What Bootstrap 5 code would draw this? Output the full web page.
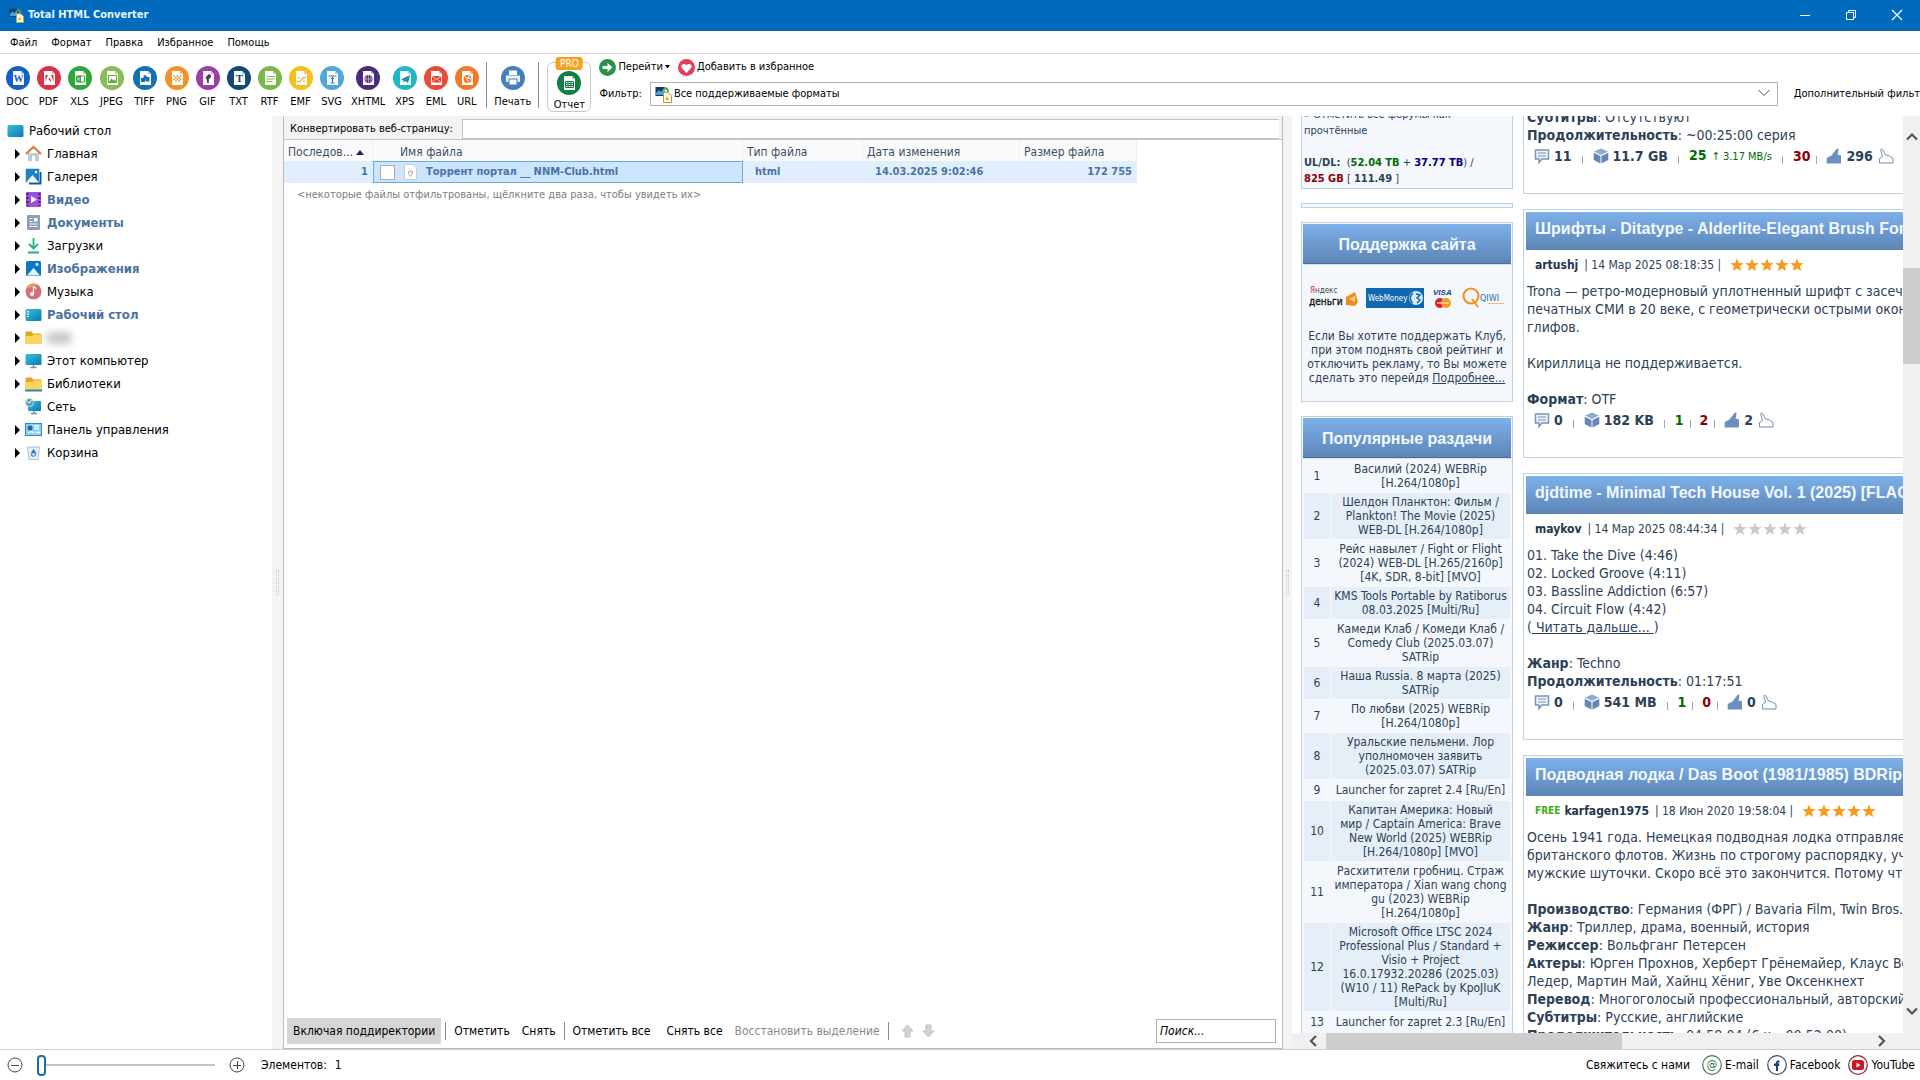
<!DOCTYPE html>
<html lang="ru">
<head>
<meta charset="utf-8">
<meta name="viewport" content="width=device-width, initial-scale=1">
<title>Total HTML Converter</title>
<link href="https://cdn.jsdelivr.net/npm/bootstrap@5.3.0/dist/css/bootstrap.min.css" rel="stylesheet">
<style>
:root{--ui:"DejaVu Sans Condensed","Noto Sans",sans-serif;--head:"Liberation Sans",Arial,sans-serif}
body{font-family:var(--ui);font-size:11px;line-height:14px;color:#000;background:#fff}
svg{display:block;flex:none}
button{font:inherit;color:inherit;background:none;border:0;padding:0}
a{color:inherit;text-decoration:none}
ul{list-style:none;margin:0;padding:0}
.titlebar{height:31px;background:#006abd;color:#fff;padding-left:9px;border-bottom:1px solid #1a64a0}
.titlebar h1{font-size:11px;line-height:16px;font-weight:700;margin:0;color:#e6f6ff}
.titlebar button{width:46px;height:30px}
.menubar{height:23px;border-bottom:1px solid #dcdcdc;padding:2px 3px 0}
.menubar a{padding:0 7px}
.toolbar{height:62px;padding-left:2px}
.tool{min-width:31px;padding:0 3px;display:flex;flex-direction:column;align-items:center;gap:5px}
.tool.wide{min-width:33px;padding:0 4px}
.vline{width:1px;background:#8c8c8c}
.toolbar .vline{height:46px}
.report{position:relative;border:1px solid #c9c9c9;border-radius:6px;width:44px;height:50px;padding-top:8px}
.report .cap{line-height:11px}
.pro{position:absolute;top:-6px;left:50%;transform:translateX(-50%);background:#f6a21c;color:#fff;border-radius:3px;font-size:10px;line-height:13px;padding:0 4px;z-index:1}
.go{height:24px;padding-top:2px}
.go button{display:flex;align-items:center;gap:2px}
.combo{position:relative;flex:1 1 auto}
.combo select{appearance:none;width:100%;height:24px;border:1px solid #b4b4b4;background:#fff;font:inherit;color:#000;padding:0 24px 0 23px;border-radius:0}
.combo svg{position:absolute;top:4px;pointer-events:none}
.combo .c-ico{left:5px}.combo .c-chev{right:8px;top:7px}
.tree{flex:0 0 272px;padding-top:3px;font-size:13px;line-height:23px}
.tree a{display:flex;align-items:center;gap:5px;height:23px;padding-left:15px;white-space:nowrap}
.tree a.rootnode{padding-left:7px}
.tree .hot{font-weight:700;color:#4a719f}
.arr{width:5px;height:10px;border-left:5px solid #000;border-top:5px solid transparent;border-bottom:5px solid transparent}
.arr.none{visibility:hidden}
.blurred{filter:blur(4px);background:#bbb;height:10px;width:24px}
.split{flex:0 0 11px;background:#f4f4f4}
.split.thin{flex-basis:9px}
.split i{width:3px;height:26px;border:1px dotted #ccc}
.center{flex:1 1 auto;min-width:0;border:1px solid #bbb;border-top:0}
.webrow{height:24px;background:#f3f3f3;border-bottom:1px solid #c6c6c6;padding-top:2px}
.webrow label{padding:0 9px 0 6px}
.webrow input{height:20px;flex:1 1 auto;border:1px solid #c4c4c4;border-right:0;background:#fff;font:inherit;min-width:0;margin-right:3px}
.files{border-collapse:separate;border-spacing:0;table-layout:fixed;width:853px;font-size:12px}
.files th{height:21px;font-weight:400;color:#3b4f63;background:#fafafa;border-right:1px solid #eee;padding:2px 4px 0;white-space:nowrap}
.files th.name{padding-left:27px}
.files td{height:22px;font-size:11px;font-weight:700;color:#4a73a8;background:#e1effc;padding:0 5px;white-space:nowrap}
.files td.ext{padding-left:12px}
.files td.picked{background:#cce4fc;border:1px solid #69abdc}
.files input{width:15px;height:15px;appearance:none;border:1px solid #a8adb2;background:#fff;margin:0 9px 0 6px}
.fname{margin-left:9px}
.note{font-size:11px;color:#7d7d7d;padding:5px 13px}
.actions{height:31px;padding:0 6px 4px 3px;font-size:12px}
.actions .on{background:#d5d5d5;height:26px;padding:0 6px}
.actions .off{color:#8a8a8a}
.actions .vline{height:18px}
.actions input{width:120px;height:24px;border:1px solid #b0b0b0;font:italic 12px/16px var(--ui);padding:0 3px}
.actions input::placeholder{color:#000;opacity:1}
.web{flex:0 0 628px;min-width:0;background:#fff}
.page{flex:1 1 auto;overflow:hidden;color:#2c4158;padding-left:9px}
.pagein{min-width:1100px;gap:10px;margin-top:-11px}
.lcol{flex:0 0 212px;font-size:12px}
.rcol{flex:1 1 auto;font-size:14px;line-height:18px;white-space:nowrap}
.box{border:1px solid #bcd1e5;background:#f4f8fd;padding:1px;margin-bottom:14px}
.box h2,.post h2{font:700 16px/20px var(--head);color:#f2f8ff;background:linear-gradient(#7db1ea,#5c84b5);margin:0}
.box h2{height:41px;padding-top:1px;border-bottom:1px solid #cfe0f2;box-shadow:inset 0 -1px #49709c;display:flex;align-items:center;justify-content:center}
.first{height:84px;padding:1px 2px 0;font-size:11px;line-height:16px}
.slim{height:5px}
.logos{padding:20px 0 19px}
.supp p{padding-bottom:15px;white-space:nowrap}
.up{color:#006b00}.dn{color:#8b0000}.bl{color:#000080}
.pop{width:100%;border-collapse:separate;border-spacing:1px;table-layout:fixed;text-align:center}
.pop .num{width:26px}
.pop td{height:20px;padding:2px 0;line-height:14px;white-space:nowrap}
.pop tr:nth-child(even) td{background:#e6eef7}
.post{border:1px solid #bcd1e5;border-right:0;background:#fff;padding:2px 3px 25px;margin-bottom:15px}
.post h2{height:38px;padding-left:9px;line-height:34px;margin-left:-1px}
.meta{font-size:12px;height:30px;padding:0 8px;margin-bottom:2px;display:flex;align-items:center;gap:6px}
.meta svg{margin-left:3px}
.meta b{color:#1f3650}
.meta .free{color:#3fae10;font-size:10px;margin-right:-2px}
.stats{display:flex;align-items:center;height:24px;padding-left:7px;font-weight:700}
.stats i{width:1px;height:8px;background:#9aa6b2;margin:8px 10px 0}
.stats i.near{margin-left:6px;margin-right:9px}
.stats svg{margin-right:4px}
.stats svg:last-child{margin:0 0 0 5px}
.stats small{font-size:11px;font-weight:400;margin-left:5px}
.vscroll{flex:0 0 17px;background:#f0f0f0;padding:16px 0 17px}
.vthumb{height:96px;background:#cdcdcd;margin-top:127px}
.hscroll{height:16px;background:#f0f0f0;padding:0 32px 0 15px}
.hthumb{flex:0 0 296px;background:#cdcdcd;margin-left:7px}
.status{height:31px;border-top:1px solid #cfcfcf;font-size:12px;padding:0 5px 0 7px}
.status input{appearance:none;width:178px;height:22px;margin:0 14px;background:linear-gradient(#c4c4c4,#c4c4c4) center/100% 2px no-repeat}
.status input::-webkit-slider-thumb{appearance:none;width:9px;height:21px;border:2px solid #1c6ea8;border-radius:4px;background:#fff}
.status a{display:flex;align-items:center;gap:3px}
</style>
<script src="https://cdn.jsdelivr.net/npm/bootstrap@5.3.0/dist/js/bootstrap.bundle.min.js"></script>
</head>
<body class="d-flex flex-column vh-100 overflow-hidden">
<svg width="0" height="0" class="position-absolute" aria-hidden="true">
<defs>
<linearGradient id="gd" x1="0" y1="0" x2="1" y2="1"><stop offset="0" stop-color="#38c3d6"/><stop offset="1" stop-color="#0b76b8"/></linearGradient>
<symbol id="pg" viewBox="0 0 24 24"><path d="M7 5h8l3 3v11H7z" fill="#fff"/><path d="M15 5v3h3z" fill="#bcc8d4"/></symbol>
<symbol id="chat" viewBox="0 0 16 16"><path d="M1.500 2h13v9H8l-3 3.500V11H1.500z" fill="#eef4fb" stroke="#7695bd" stroke-width="1.500"/><path d="M4 5h8M4 8h8" stroke="#7695bd"/></symbol>
<symbol id="cube" viewBox="0 0 16 16"><path d="M8 .5l7 3-7 3.500-7-3.500z" fill="#8fadd2"/><path d="M.7 4.700L7.500 8v7.500l-6.800-3.500zM15.300 4.700L8.500 8v7.500l6.800-3.500z" fill="#6488b6"/></symbol>
<symbol id="thumb" viewBox="0 0 16 16"><path d="M.7 10l4.800-2.500L10.500 1c1.300-1.200 2.300-.2 2 1.300L11.500 6.500l3.500 1v8H.7z" fill="#6a8fc0"/></symbol>
<symbol id="thumbo" viewBox="0 0 16 16"><path d="M1.500 15V10.500L4.500 8.500 2.800 2.500C2.500.8 4 .3 4.800 1.800L7.500 7l4 1 3.500 2.500V15z" fill="#fafcff" stroke="#7190b5"/></symbol>
<symbol id="conv" viewBox="0 0 17 17"><rect x=".5" y="1" width="9" height="9" fill="#123a63"/><path d="M1 7l3-3 2 2 3-4v7H1z" fill="#49a8d8"/><path d="M9 2c3 0 4 2 4 4" stroke="#57a639" stroke-width="2" fill="none"/><path d="M8.500 6.500h5l3 3v7h-8z" fill="#fffbe8" stroke="#b99a36"/><path d="M10 14l2-4 2 4z" fill="#e4b322"/></symbol>
<symbol id="desk" viewBox="0 0 17 17"><rect x=".5" y="3" width="16" height="12" rx="1.500" fill="url(#gd)"/></symbol>
<symbol id="fold" viewBox="0 0 17 17"><path d="M.5 3.500q0-1 1-1h5l1.500 2h7.500q1 0 1 1V14q0 1-1 1h-14q-1 0-1-1z" fill="#dfa51d"/><path d="M.5 7h6.500L8.500 5.500h8V14q0 1-1 1h-14q-1 0-1-1z" fill="#ffd45e"/></symbol>
<symbol id="pic" viewBox="0 0 17 17"><rect x="1" y="1" width="15" height="15" rx="1.500" fill="#0c78c8"/><path d="M2 15.500l6.500-7.500 6.500 7.500z" fill="#e9f5ff"/><circle cx="12" cy="4.500" r="1.400" fill="#fff"/></symbol>
<symbol id="star" viewBox="0 0 14 14"><path d="M7 .5l1.800 4.600 4.900.2-3.900 3 1.400 4.800L7 10.400l-4.200 2.700 1.400-4.800-3.900-3 4.900-.2z"/></symbol>
</defs></svg>

<header class="titlebar d-flex align-items-center flex-shrink-0">
 <svg width="15" height="15" class="me-1"><use href="#conv"/></svg>
 <h1>Total HTML Converter</h1>
 <div class="ms-auto d-flex">
  <button aria-label="Свернуть"><svg class="mx-auto" width="12" height="12"><path d="M1 6.500h10" stroke="#fff"/></svg></button>
  <button aria-label="Развернуть"><svg class="mx-auto" width="12" height="12" fill="none" stroke="#fff"><path d="M1.500 3.500h7v7h-7zM3.500 3V1.500h7v7H9"/></svg></button>
  <button aria-label="Закрыть"><svg class="mx-auto" width="12" height="12"><path d="M1 1l10 10M11 1L1 11" stroke="#fff" stroke-width="1.200"/></svg></button>
 </div>
</header>
<nav class="menubar d-flex align-items-center flex-shrink-0"><a href="#">Файл</a><a href="#">Формат</a><a href="#">Правка</a><a href="#">Избранное</a><a href="#">Помощь</a></nav>

<div class="toolbar d-flex align-items-start flex-shrink-0 overflow-hidden">
 <div class="d-flex pt-2 mt-1 flex-shrink-0">
  <button class="tool"><svg width="24" height="24" viewBox="0 0 24 24"><circle cx="12" cy="12" r="12" fill="#1560c8"/><use href="#pg"/><text x="12.500" y="16" text-anchor="middle" font-family="Liberation Serif" font-weight="700" font-size="10" fill="#1560c8">W</text></svg>DOC</button>
  <button class="tool"><svg width="24" height="24" viewBox="0 0 24 24"><circle cx="12" cy="12" r="12" fill="#d8334a"/><use href="#pg"/><path d="M8.500 9h2.500L8.500 15.500zM16.500 9H14l2.500 6.500zM12.500 11l2 4.500h-1.300l-.7-1.500h-1z" fill="#d8334a"/></svg>PDF</button>
  <button class="tool"><svg width="24" height="24" viewBox="0 0 24 24"><circle cx="12" cy="12" r="12" fill="#2fa83a"/><use href="#pg"/><path d="M8 10l5-1v8l-5-1z" fill="#2fa83a"/><path d="M13 10h3.500v6H13" fill="none" stroke="#2fa83a"/><path d="M9.500 11.500l2 3m0-3l-2 3" stroke="#fff" stroke-width=".8"/></svg>XLS</button>
  <button class="tool wide"><svg width="24" height="24" viewBox="0 0 24 24"><circle cx="12" cy="12" r="12" fill="#86bd57"/><use href="#pg"/><rect x="8.500" y="9.500" width="8" height="7" fill="none" stroke="#6aa83c"/><path d="M9 16l2.500-3.500 2 2 1-1 2 2.500z" fill="#6aa83c"/></svg>JPEG</button>
  <button class="tool wide"><svg width="24" height="24" viewBox="0 0 24 24"><circle cx="12" cy="12" r="12" fill="#1470b4"/><use href="#pg"/><path d="M8 12h4v4H8zM12.500 11h4v4.500h-4zM11 9l3 1-1 4-3-1z" fill="#1470b4"/></svg>TIFF</button>
  <button class="tool"><svg width="24" height="24" viewBox="0 0 24 24"><circle cx="12" cy="12" r="12" fill="#f4912a"/><use href="#pg"/><path d="M8.500 10h8M8.500 13.200h8" stroke="#f4912a" stroke-width="1.600" stroke-dasharray="1.600 1.600"/><path d="M10.100 11.600h6.400M10.100 14.800h6.400" stroke="#f4912a" stroke-width="1.600" stroke-dasharray="1.600 1.600"/></svg>PNG</button>
  <button class="tool"><svg width="24" height="24" viewBox="0 0 24 24"><circle cx="12" cy="12" r="12" fill="#9a40a4"/><use href="#pg"/><path d="M12 17v-7l-2 2M12 10c2-2 3 0 1.500 1.500z" fill="#5e2572" stroke="#5e2572" stroke-width="1.600"/></svg>GIF</button>
  <button class="tool"><svg width="24" height="24" viewBox="0 0 24 24"><circle cx="12" cy="12" r="12" fill="#0f4a78"/><use href="#pg"/><text x="12.500" y="16" text-anchor="middle" font-family="Liberation Serif" font-weight="700" font-size="11" fill="#0f4a78">T</text></svg>TXT</button>
  <button class="tool"><svg width="24" height="24" viewBox="0 0 24 24"><circle cx="12" cy="12" r="12" fill="#79b94a"/><use href="#pg"/><path d="M8.500 10.500h8M8.500 13h8M8.500 15.500h6" stroke="#79b94a" stroke-width="1.200"/></svg>RTF</button>
  <button class="tool"><svg width="24" height="24" viewBox="0 0 24 24"><circle cx="12" cy="12" r="12" fill="#f3c01c"/><use href="#pg"/><path d="M8 15.500h3l3-4h3M9 12h2M14 15h2" stroke="#eda12b" stroke-width="1.200" fill="none"/></svg>EMF</button>
  <button class="tool"><svg width="24" height="24" viewBox="0 0 24 24"><circle cx="12" cy="12" r="12" fill="#4fa8dc"/><use href="#pg"/><path d="M8.500 10h8M12.500 10v7M10.500 17h4M11 12.500h3" stroke="#2b82bd" stroke-width="1.200" fill="none"/></svg>SVG</button>
  <button class="tool wide"><svg width="24" height="24" viewBox="0 0 24 24"><circle cx="12" cy="12" r="12" fill="#4a2a7a"/><use href="#pg"/><circle cx="12.500" cy="13" r="4" fill="#4a2a7a"/><path d="M8.500 13h8M12.500 9v8M10.500 9.500q-1.500 3.500 0 7M14.500 9.500q1.500 3.500 0 7" stroke="#fff" stroke-width=".5" fill="none"/></svg>XHTML</button>
  <button class="tool"><svg width="24" height="24" viewBox="0 0 24 24"><circle cx="12" cy="12" r="12" fill="#20b8c4"/><use href="#pg"/><path d="M8 13.500l9-4.500-2 8-3-2-1.500 2v-2.500z" fill="#1593ab"/></svg>XPS</button>
  <button class="tool"><svg width="24" height="24" viewBox="0 0 24 24"><circle cx="12" cy="12" r="12" fill="#e64b33"/><use href="#pg"/><rect x="8" y="10" width="9" height="6.500" fill="#e0402c"/><path d="M8 10l4.500 3.500L17 10M8 16.500l3-3m6 3l-3-3" stroke="#fff" stroke-width=".8" fill="none"/></svg>EML</button>
  <button class="tool"><svg width="24" height="24" viewBox="0 0 24 24"><circle cx="12" cy="12" r="12" fill="#f17a2a"/><use href="#pg"/><circle cx="12.500" cy="13" r="4" fill="#f17a2a"/><path d="M10 11l2 1v2l2 2M14 10l-1 2 3 1" stroke="#fff" fill="none"/></svg>URL</button>
 </div>
 <div class="vline mt-2 ms-1"></div>
 <button class="tool pt-2 mt-1 ms-1"><svg width="24" height="24" viewBox="0 0 24 24"><circle cx="12" cy="12" r="12" fill="#4580bd"/><path d="M8 4.500h8V9H8z" fill="#fff"/><path d="M5 9.500h14V16H5z" fill="#e8f0f8"/><path d="M8 13h8v6H8z" fill="#fff" stroke="#4580bd"/></svg>Печать</button>
 <div class="vline mt-2 ms-1 me-2"></div>
 <button class="report d-flex flex-column align-items-center mt-2 flex-shrink-0"><span class="pro">PRO</span><svg class="mb-1" width="24" height="24" viewBox="0 0 24 24"><circle cx="12" cy="12" r="12" fill="#128043"/><use href="#pg"/><path d="M8.500 10.500h8v6h-8zM8.500 12.500h8M8.500 14.500h8M11 10.500v6M14 10.500v6" stroke="#128043" fill="none"/></svg><span class="cap">Отчет</span></button>
 <div class="flex-grow-1 ms-2">
  <div class="go d-flex align-items-center">
   <button><svg width="17" height="17" viewBox="0 0 17 17"><circle cx="8.500" cy="8.500" r="8.500" fill="#25944a"/><path d="M3.500 7h5V4l5 4.500-5 4.500v-3h-5z" fill="#fff"/></svg>Перейти<svg width="5" height="4"><path d="M0 0h5L2.500 3.500z"/></svg></button>
   <button class="ms-2"><svg width="17" height="17" viewBox="0 0 17 17"><circle cx="8.500" cy="8.500" r="8.500" fill="#e2405a"/><path d="M8.500 14L3.500 8.500c-1-3 3-5 5-2 2-3 6-1 5 2z" fill="#fff"/></svg>Добавить в избранное</button>
  </div>
  <div class="d-flex align-items-center mt-1">
   <label for="flt" class="me-2">Фильтр:</label>
   <div class="combo"><svg class="c-ico" width="17" height="17"><use href="#conv"/></svg><select id="flt"><option>Все поддерживаемые форматы</option></select><svg class="c-chev" width="12" height="8" fill="none" stroke="#555"><path d="M.5 1l5.500 5.500L11.500 1"/></svg></div>
   <a href="#" class="ms-3 text-nowrap flex-shrink-0">Дополнительный фильт</a>
  </div>
 </div>
</div>

<main class="d-flex flex-grow-1" style="min-height:0">
 <aside class="tree"><ul>
  <li><a class="rootnode" href="#"><svg width="17" height="17"><use href="#desk"/></svg>Рабочий стол</a></li>
  <li><a href="#"><i class="arr"></i><svg width="17" height="17"><path d="M3 8h11v8H10v-5H7v5H3z" fill="#c4cad1"/><path d="M1 9l7.500-7L16 9" stroke="#e07b2f" stroke-width="2.200" fill="none"/></svg>Главная</a></li>
  <li><a href="#"><i class="arr"></i><svg width="17" height="17"><path d="M4 4h12.500v12.500H4z" fill="#0d5c9c"/><rect x=".5" y=".5" width="14" height="14" rx="1" fill="#1a82c6" stroke="#fff" stroke-width=".5"/><path d="M1.500 14L7.500 7l6 7z" fill="#f0f8ff"/><circle cx="11" cy="4" r="1.300" fill="#fff"/></svg>Галерея</a></li>
  <li><a class="hot" href="#"><i class="arr"></i><svg width="17" height="17"><rect x="1" y="1" width="15" height="15" rx="1" fill="#9b4fdc"/><path d="M2.500 2v13M14.500 2v13" stroke="#40186e" stroke-width="2" stroke-dasharray="2 2"/><path d="M6 5l6 3.500L6 12z" fill="#fff"/></svg>Видео</a></li>
  <li><a class="hot" href="#"><i class="arr"></i><svg width="17" height="17"><rect x="2" y="1" width="13" height="15" rx="1" fill="#8a9db3"/><path d="M4.500 4.500h3M4.500 7.500h3M4.500 10h8M4.500 12.500h8" stroke="#fff"/><path d="M9 4h3.500v3.500H9z" fill="#fff"/></svg>Документы</a></li>
  <li><a href="#"><i class="arr"></i><svg width="17" height="17" fill="none" stroke="#21b08a" stroke-width="1.800"><path d="M8.500 1v10M4 7l4.500 4.500L13 7M3 15.500h11"/></svg>Загрузки</a></li>
  <li><a class="hot" href="#"><i class="arr"></i><svg width="17" height="17"><use href="#pic"/></svg>Изображения</a></li>
  <li><a href="#"><i class="arr"></i><svg width="17" height="17"><circle cx="8.500" cy="8.500" r="8" fill="#d4707c"/><path d="M1 6a8 8 0 0 1 12-4z" fill="#e49a62"/><circle cx="7" cy="11" r="2" fill="#fff"/><path d="M8.500 11V4l3 1.500" stroke="#fff" stroke-width="1.300" fill="none"/></svg>Музыка</a></li>
  <li><a class="hot" href="#"><i class="arr"></i><svg width="17" height="17"><use href="#desk"/><path d="M3 5v6" stroke="#fff" stroke-width="1.500" stroke-dasharray="1.500 1"/></svg>Рабочий стол</a></li>
  <li><a href="#" aria-label="Папка"><i class="arr"></i><svg width="17" height="17"><use href="#fold"/></svg><span class="blurred"></span></a></li>
  <li><a href="#"><i class="arr"></i><svg width="17" height="17"><rect x=".5" y="2" width="16" height="11" rx="1" fill="url(#gd)"/><path d="M8.500 13v2.500M5.500 15.500h6" stroke="#7c8c99" stroke-width="1.300"/></svg>Этот компьютер</a></li>
  <li><a href="#"><i class="arr"></i><svg width="17" height="17"><use href="#fold"/><path d="M0 15.500h17" stroke="#2383c4" stroke-width="2"/></svg>Библиотеки</a></li>
  <li><a href="#"><i class="arr none"></i><svg width="17" height="17"><rect x="3" y="3" width="13" height="10" rx="1" fill="url(#gd)"/><circle cx="4.500" cy="4.500" r="4" fill="#5b9cb8" stroke="#d5eaf4" stroke-width=".8"/><path d="M1.500 3l3 2 2-3" stroke="#fff" fill="none"/><path d="M9 13v2.500M6 15.500h6" stroke="#7c8c99" stroke-width="1.300"/></svg>Сеть</a></li>
  <li><a href="#"><i class="arr"></i><svg width="17" height="17"><rect x=".5" y="2.500" width="16" height="12" fill="#8fd0f2" stroke="#2e8ac0"/><circle cx="5" cy="7" r="2.500" fill="#1b6aa5"/><path d="M9 5h5M9 7.500h5M3 12l3-1.500 3 1.500M11 11.500h4" stroke="#fff" stroke-width="1.300" fill="none"/></svg>Панель управления</a></li>
  <li><a href="#"><i class="arr"></i><svg width="17" height="17"><path d="M2.500 3h12l-1.500 12.500H4z" fill="#e7edf2" stroke="#b4c0cb"/><path d="M8.500 6l2 3h-4zM6 10.500l2 2M11 10l-2 2.500" fill="#2380c8" stroke="#2380c8" stroke-width="1.200"/></svg>Корзина</a></li>
 </ul></aside>
 <div class="split d-flex align-items-center justify-content-center"><i></i></div>
 <section class="center d-flex flex-column">
  <div class="webrow d-flex flex-shrink-0 align-items-center"><label for="url">Конвертировать веб-страницу:</label><input id="url" type="text"></div>
  <table class="files">
   <colgroup><col style="width:89px"><col style="width:370px"><col style="width:120px"><col style="width:157px"><col style="width:117px"></colgroup>
   <thead><tr><th>Последов... <svg class="d-inline-block" width="8" height="5"><path d="M0 5l4-5 4 5z" fill="#1b2a5c"/></svg></th><th class="name">Имя файла</th><th>Тип файла</th><th>Дата изменения</th><th>Размер файла</th></tr></thead>
   <tbody><tr><td class="text-end">1</td><td class="picked p-0"><div class="d-flex align-items-center"><input type="checkbox" aria-label="Выбрать файл"><svg width="13" height="16"><path d="M.5 .5h8.500l3.500 3.500v11.500H.5z" fill="#fff" stroke="#c9ced3"/><path d="M4.500 7.500l4-.5-.5 3.500-1.500 2L5 10.500z" fill="none" stroke="#a5adb5"/></svg><span class="fname">Торрент портал __ NNM-Club.html</span></div></td><td class="ext">html</td><td class="ext">14.03.2025 9:02:46</td><td class="text-end">172 755</td></tr></tbody>
  </table>
  <div class="note">&lt;некоторые файлы отфильтрованы, щёлкните два раза, чтобы увидеть их&gt;</div>
  <div class="actions d-flex align-items-center mt-auto flex-shrink-0 text-nowrap">
   <button class="on">Включая поддиректории</button><div class="vline ms-1"></div>
   <button class="ms-2">Отметить</button><button class="ms-2 ps-1">Снять</button><div class="vline mx-2"></div>
   <button>Отметить все</button><button class="ms-3">Снять все</button><button class="off ms-2 ps-1">Восстановить выделение</button><div class="vline mx-2"></div>
   <button class="ms-1" aria-label="Вверх"><svg width="13" height="14"><path d="M6.500 1L12 7H9v6H4V7H1z" fill="#d2d2d2" stroke="#c2c2c2"/></svg></button>
   <button class="ms-2" aria-label="Вниз"><svg width="13" height="14"><path d="M6.500 13L12 7H9V1H4v6H1z" fill="#d2d2d2" stroke="#c2c2c2"/></svg></button>
   <input class="ms-auto" type="text" placeholder="Поиск..." aria-label="Поиск">
  </div>
 </section>
 <div class="split thin d-flex align-items-center justify-content-center"><i></i></div>
 <section class="web d-flex flex-column">
  <div class="d-flex flex-grow-1" style="min-height:0">
   <div class="page h-100">
    <div class="pagein d-flex">
     <div class="lcol">
      <div class="box first">» Отметить все форумы как<br>прочтённые<br><br><b>UL/DL:</b>&nbsp; (<b class="up">52.04 TB</b> + <b class="bl">37.77 TB</b>) /<br><b class="dn">825 GB</b> [ <b>111.49</b> ]</div>
      <div class="box slim"></div>
      <div class="box supp"><h2>Поддержка сайта</h2>
       <div class="d-flex align-items-center justify-content-center gap-2 logos">
        <svg width="49" height="25" viewBox="0 0 49 25"><text x="1" y="8" font-size="8" font-family="DejaVu Sans Condensed" fill="#444"><tspan fill="#d22">Я</tspan>ндекс</text><text x="0" y="20" font-size="10" font-family="DejaVu Sans Condensed" fill="#111" stroke="#111" stroke-width=".3">деньги</text><path d="M37 12l9-5 3 10-3 4-9-1z" fill="#f08a1c"/><path d="M40 14l6-3v6z" fill="#ffd9a0"/></svg>
        <svg width="58" height="20" viewBox="0 0 58 20"><rect width="58" height="20" fill="#1069b0"/><text x="2" y="13" font-size="8" font-family="DejaVu Sans Condensed" fill="#fff">WebMoney</text><circle cx="50" cy="10" r="7" fill="#d8eaf8"/><path d="M47 5a6 6 0 0 0 0 10M50 6l4 1-3 3 3 2-3 3" stroke="#1069b0" stroke-width="1.500" fill="none"/></svg>
        <svg width="22" height="22" viewBox="0 0 22 22"><text x="1" y="8" font-size="8" font-style="italic" font-weight="700" font-family="Liberation Sans" fill="#1a3c7c">VISA</text><circle cx="8" cy="16" r="5" fill="#d8222a"/><circle cx="14" cy="16" r="5" fill="#f59a1e"/><path d="M5 16h12" stroke="#fff"/></svg>
        <svg width="44" height="22" viewBox="0 0 44 22"><circle cx="9" cy="9" r="7.500" fill="none" stroke="#f6921e" stroke-width="2.200"/><path d="M10 12l6 8" stroke="#f6921e" stroke-width="2"/><text x="18" y="14" font-size="9" font-family="DejaVu Sans Condensed" fill="#2a6fae">QIWI</text><path d="M26 16.500h16" stroke="#f6b96a"/></svg>
       </div>
       <p class="text-center m-0">Если Вы хотите поддержать Клуб,<br>при этом поднять свой рейтинг и<br>отключить рекламу, то Вы можете<br>сделать это перейдя <a href="#" class="text-decoration-underline">Подробнее...</a></p>
      </div>
      <div class="box"><h2>Популярные раздачи</h2>
       <table class="pop"><tbody>
        <tr><td class="num">1</td><td>Василий (2024) WEBRip<br>[H.264/1080p]</td></tr>
        <tr><td>2</td><td>Шелдон Планктон: Фильм /<br>Plankton! The Movie (2025)<br>WEB-DL [H.264/1080p]</td></tr>
        <tr><td>3</td><td>Рейс навылет / Fight or Flight<br>(2024) WEB-DL [H.265/2160p]<br>[4K, SDR, 8-bit] [MVO]</td></tr>
        <tr><td>4</td><td>KMS Tools Portable by Ratiborus<br>08.03.2025 [Multi/Ru]</td></tr>
        <tr><td>5</td><td>Камеди Клаб / Комеди Клаб /<br>Comedy Club (2025.03.07)<br>SATRip</td></tr>
        <tr><td>6</td><td>Наша Russia. 8 марта (2025)<br>SATRip</td></tr>
        <tr><td>7</td><td>По любви (2025) WEBRip<br>[H.264/1080p]</td></tr>
        <tr><td>8</td><td>Уральские пельмени. Лор<br>уполномочен заявить<br>(2025.03.07) SATRip</td></tr>
        <tr><td>9</td><td>Launcher for zapret 2.4 [Ru/En]</td></tr>
        <tr><td>10</td><td>Капитан Америка: Новый<br>мир / Captain America: Brave<br>New World (2025) WEBRip<br>[H.264/1080p] [MVO]</td></tr>
        <tr><td>11</td><td>Расхитители гробниц. Страж<br>императора / Xian wang chong<br>gu (2023) WEBRip<br>[H.264/1080p]</td></tr>
        <tr><td>12</td><td>Microsoft Office LTSC 2024<br>Professional Plus / Standard +<br>Visio + Project<br>16.0.17932.20286 (2025.03)<br>(W10 / 11) RePack by KpoJIuK<br>[Multi/Ru]</td></tr>
        <tr><td>13</td><td>Launcher for zapret 2.3 [Ru/En]</td></tr>
       </tbody></table>
      </div>
     </div>
     <div class="rcol">
      <article class="post"><div><b>Субтитры</b>: Отсутствуют<br><b>Продолжительность</b>: ~00:25:00 серия</div>
       <div class="stats"><svg width="16" height="16"><use href="#chat"/></svg>11<i></i><svg width="16" height="16"><use href="#cube"/></svg>11.7 GB<i></i><span class="up">25<small>↑ 3.17 MB/s</small></span><i></i><span class="dn">30</span><i class="near"></i><svg width="16" height="16"><use href="#thumb"/></svg>296<svg width="16" height="16"><use href="#thumbo"/></svg></div></article>
      <article class="post"><h2>Шрифты - Ditatype - Alderlite-Elegant Brush Font</h2>
       <div class="meta"><b>artushj</b> | 14 Мар 2025 08:18:35 | <svg width="74" height="14" fill="#f79a1c"><use href="#star" width="14" height="14"/><use href="#star" x="15" width="14" height="14"/><use href="#star" x="30" width="14" height="14"/><use href="#star" x="45" width="14" height="14"/><use href="#star" x="60" width="14" height="14"/></svg></div>
       <div>Trona — ретро-модерновый уплотненный шрифт с засечками<br>печатных СМИ в 20 веке, с геометрически острыми окончаниями<br>глифов.<br><br>Кириллица не поддерживается.<br><br><b>Формат</b>: OTF</div>
       <div class="stats"><svg width="16" height="16"><use href="#chat"/></svg>0<i></i><svg width="16" height="16"><use href="#cube"/></svg>182 KB<i></i><span class="up">1</span><i class="near"></i><span class="dn">2</span><i class="near"></i><svg width="16" height="16"><use href="#thumb"/></svg>2<svg width="16" height="16"><use href="#thumbo"/></svg></div></article>
      <article class="post"><h2>djdtime - Minimal Tech House Vol. 1 (2025) [FLAC]</h2>
       <div class="meta"><b>maykov</b> | 14 Мар 2025 08:44:34 | <svg width="74" height="14" fill="#c9c9cb"><use href="#star" width="14" height="14"/><use href="#star" x="15" width="14" height="14"/><use href="#star" x="30" width="14" height="14"/><use href="#star" x="45" width="14" height="14"/><use href="#star" x="60" width="14" height="14"/></svg></div>
       <div>01. Take the Dive (4:46)<br>02. Locked Groove (4:11)<br>03. Bassline Addiction (6:57)<br>04. Circuit Flow (4:42)<br>(<a href="#" class="text-decoration-underline">&nbsp;Читать дальше...&nbsp;</a>)<br><br><b>Жанр</b>: Techno<br><b>Продолжительность</b>: 01:17:51</div>
       <div class="stats"><svg width="16" height="16"><use href="#chat"/></svg>0<i></i><svg width="16" height="16"><use href="#cube"/></svg>541 MB<i></i><span class="up">1</span><i class="near"></i><span class="dn">0</span><i class="near"></i><svg width="16" height="16"><use href="#thumb"/></svg>0<svg width="16" height="16"><use href="#thumbo"/></svg></div></article>
      <article class="post"><h2>Подводная лодка / Das Boot (1981/1985) BDRip</h2>
       <div class="meta"><b class="free">FREE</b><b>karfagen1975</b> | 18 Июн 2020 19:58:04 | <svg width="74" height="14" fill="#f79a1c"><use href="#star" width="14" height="14"/><use href="#star" x="15" width="14" height="14"/><use href="#star" x="30" width="14" height="14"/><use href="#star" x="45" width="14" height="14"/><use href="#star" x="60" width="14" height="14"/></svg></div>
       <div>Осень 1941 года. Немецкая подводная лодка отправляется<br>британского флотов. Жизнь по строгому распорядку, учения<br>мужские шуточки. Скоро всё это закончится. Потому что<br><br><b>Производство</b>: Германия (ФРГ) / Bavaria Film, Twin Bros. Productions<br><b>Жанр</b>: Триллер, драма, военный, история<br><b>Режиссер</b>: Вольфганг Петерсен<br><b>Актеры</b>: Юрген Прохнов, Херберт Грёнемайер, Клаус Веннеманн<br>Ледер, Мартин Май, Хайнц Хёниг, Уве Оксенкнехт<br><b>Перевод</b>: Многоголосый профессиональный, авторский<br><b>Субтитры</b>: Русские, английские<br><b>Продолжительность</b>: 04:58:04 (6 x ~00:52:00)</div></article>
     </div>
    </div>
   </div>
   <div class="vscroll d-flex flex-column"><svg class="mx-auto" width="12" height="9" fill="none" stroke="#555" stroke-width="2.200"><path d="M1 7.500l5-5 5 5"/></svg><div class="vthumb"></div><svg class="mx-auto mt-auto" width="12" height="9" fill="none" stroke="#555" stroke-width="2.200"><path d="M1 1.500l5 5 5-5"/></svg></div>
  </div>
  <div class="hscroll d-flex align-items-stretch flex-shrink-0"><svg class="my-auto" width="12" height="12" fill="none" stroke="#555" stroke-width="2.200"><path d="M9 1L4 6l5 5"/></svg><div class="hthumb"></div><svg class="my-auto ms-auto" width="12" height="12" fill="none" stroke="#555" stroke-width="2.200"><path d="M3 1l5 5-5 5"/></svg></div>
 </section>
</main>
<footer class="status d-flex align-items-center flex-shrink-0">
 <button aria-label="Уменьшить"><svg width="16" height="16" fill="none" stroke="#444"><circle cx="8" cy="8" r="7"/><path d="M4 8.500h8"/></svg></button>
 <input type="range" min="0" max="100" value="0" aria-label="Масштаб">
 <button aria-label="Увеличить"><svg width="16" height="16" fill="none" stroke="#444"><circle cx="8" cy="8" r="7"/><path d="M4 8.500h8M8.500 4v8"/></svg></button>
 <span class="ms-3">Элементов:</span><span class="ms-2">1</span>
 <div class="ms-auto d-flex gap-2 align-items-center"><span class="me-1">Свяжитесь с нами</span>
  <a href="#"><svg width="20" height="20"><circle cx="10" cy="10" r="9.300" fill="#fff" stroke="#3a7d4e" stroke-width="1.200"/><text x="10" y="14" text-anchor="middle" font-size="12" font-family="DejaVu Sans Condensed" fill="#2c7a44">@</text></svg>E-mail</a>
  <a href="#"><svg width="20" height="20"><circle cx="10" cy="10" r="9.300" fill="#fff" stroke="#2f4a7a" stroke-width="1.200"/><path d="M9 16v-5H7V8.500h2C9 6 10 5 12.500 5.200v2.200c-1.500 0-1.500.3-1.500 1.100h1.500L12 11h-1v5z" fill="#1f3d73"/></svg>Facebook</a>
  <a href="#"><svg width="20" height="20"><circle cx="10" cy="10" r="9.300" fill="#fff" stroke="#8c2230" stroke-width="1.200"/><rect x="4" y="5" width="12" height="10" rx="2.500" fill="#cc1626"/><path d="M8.500 7.500l4 2.500-4 2.500z" fill="#fff"/></svg>YouTube</a></div>
</footer>
</body>
</html>
